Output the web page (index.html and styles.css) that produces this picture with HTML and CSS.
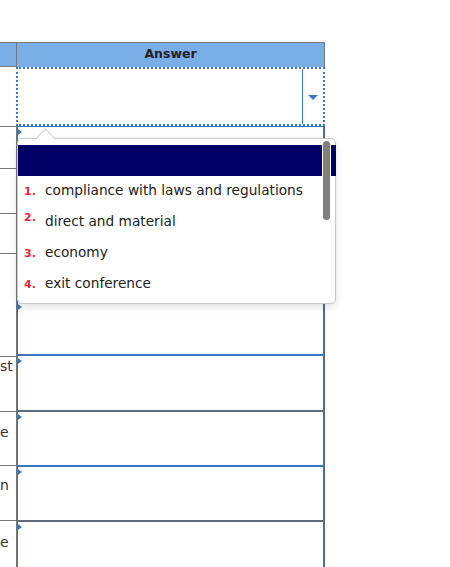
FILE: index.html
```html
<!DOCTYPE html>
<html>
<head>
<meta charset="utf-8">
<link rel="stylesheet" href="styles.css">
</head>
<body>
<div class="sheet">
  <div class="hrow">
    <div class="hcell-left"></div>
    <div class="hcell-answer">Answer</div>
  </div>
  <div class="irow">
    <div class="icell-left"></div>
    <div class="select">
      <div class="select-value"></div>
      <div class="select-btn"><span class="caret"></span></div>
    </div>
  </div>
  <div class="body">
    <div class="lcol">
      <div class="lcell h42"></div>
      <div class="lcell h45"></div>
      <div class="lcell h40"></div>
      <div class="lcell h103"></div>
      <div class="lcell h55 t1"><span class="frag">st</span></div>
      <div class="lcell h54 t12"><span class="frag">e</span></div>
      <div class="lcell h55 t11"><span class="frag">n</span></div>
      <div class="lcell h60 t13"><span class="frag">e</span></div>
    </div>
    <div class="rcol">
      <div class="rcell first h174"></div>
      <div class="rcell blue h54"></div>
      <div class="rcell blue h56"></div>
      <div class="rcell gray h55"></div>
      <div class="rcell blue h55"></div>
      <div class="rcell gray h60"></div>
    </div>
  </div>

  <div class="dropdown">
    <span class="pointer"></span>
    <div class="selected-bar"></div>
    <ul class="options">
      <li><span class="num">1.</span><span class="opt">compliance with laws and regulations</span></li>
      <li><span class="num raised">2.</span><span class="opt">direct and material</span></li>
      <li><span class="num">3.</span><span class="opt">economy</span></li>
      <li><span class="num">4.</span><span class="opt">exit conference</span></li>
    </ul>
    <div class="scroll-track"><div class="scroll-thumb"></div></div>
  </div>
</div>
</body>
</html>
```
FILE: styles.css
```css
html, body {
  margin: 0;
  padding: 0;
  background: #ffffff;
  font-family: "DejaVu Sans", Verdana, sans-serif;
  overflow: hidden;
}
.sheet {
  position: relative;
  width: 450px;
  height: 567px;
  padding-top: 42px;
  box-sizing: border-box;
}
.hrow {
  display: flex;
  width: 325px;
  height: 25px;
  box-sizing: border-box;
  border-top: 1px solid #777777;
  background: #7aaee6;
}
.hcell-left {
  width: 17px;
  box-sizing: border-box;
  border-right: 1px solid #777777;
  border-bottom: 1px solid #777777;
}
.hcell-answer {
  flex: 1;
  box-sizing: border-box;
  border-right: 1px solid #777777;
  text-align: center;
  font-weight: bold;
  font-size: 12.5px;
  line-height: 22px;
  color: #222222;
}
.irow {
  display: flex;
  width: 325px;
  height: 59px;
}
.icell-left {
  width: 16px;
}
.select {
  flex: 1;
  display: flex;
  box-sizing: border-box;
  border: 2px dotted #3b78c4;
}
.select-value {
  flex: 1;
}
.select-btn {
  width: 20px;
  border-left: 1px solid #3b78c4;
  display: flex;
  align-items: center;
  justify-content: center;
}
.caret {
  width: 0;
  height: 0;
  border-left: 5px solid transparent;
  border-right: 5px solid transparent;
  border-top: 5px solid #3b78c4;
  margin-top: 2px;
}
.body {
  display: flex;
  width: 325px;
}
.lcol {
  width: 17px;
  box-sizing: border-box;
  border-right: 1px solid #777777;
}
.lcell {
  box-sizing: border-box;
  border-top: 1px solid #777777;
  overflow: hidden;
  white-space: nowrap;
  font-size: 14px;
  color: #333333;
  line-height: 16px;
}
.frag { display: inline-block; }
.t1 { padding-top: 1px; }
.t11 { padding-top: 11px; }
.t12 { padding-top: 12px; }
.t13 { padding-top: 13px; }
.h40 { height: 40px; }
.h42 { height: 42px; }
.h45 { height: 45px; }
.h54 { height: 54px; }
.h55 { height: 55px; }
.h56 { height: 56px; }
.h60 { height: 60px; }
.h103 { height: 103px; }
.h174 { height: 174px; }
.rcol {
  flex: 1;
}
.rcell {
  position: relative;
  box-sizing: border-box;
  border-left: 1px solid #4a70a6;
  border-right: 2px solid #4c6d98;
}
.rcell::before {
  content: "";
  position: absolute;
  left: 0;
  top: 2px;
  width: 0;
  height: 0;
  border-top: 3px solid transparent;
  border-bottom: 3px solid transparent;
  border-left: 4px solid #3b78c4;
}
.rcell.first { border-top: 1px solid #3d6fb3; }
.rcell.blue { border-top: 2px solid #3b74be; }
.rcell.gray { border-top: 2px solid #5f6b7c; }

.dropdown {
  position: absolute;
  left: 17px;
  top: 138px;
  width: 319px;
  height: 166px;
  box-sizing: border-box;
  border: 1px solid #c9c9c9;
  border-radius: 5px;
  background: #ffffff;
  box-shadow: 0 3px 8px rgba(0, 0, 0, 0.13);
  padding-top: 6px;
}
.pointer {
  position: absolute;
  left: 21px;
  top: -8px;
  width: 12px;
  height: 12px;
  background: #ffffff;
  border-left: 1px solid #cfcfcf;
  border-top: 1px solid #cfcfcf;
  transform: rotate(45deg);
}
.selected-bar {
  position: relative;
  height: 31px;
  background: #000066;
  margin-right: -1px;
}
.options {
  list-style: none;
  margin: 0;
  padding: 0;
}
.options li {
  display: flex;
  align-items: baseline;
  height: 31px;
  line-height: 29px;
  padding-left: 6px;
}
.num {
  width: 21px;
  font-size: 11px;
  font-weight: bold;
  color: #ee1f3b;
  position: relative;
}
.num.raised { top: -5px; }
.opt {
  font-size: 13.7px;
  color: #222222;
}
.scroll-track {
  position: absolute;
  right: 4px;
  top: 1px;
  width: 9px;
  height: 38px;
  background: #ffffff;
}
.scroll-thumb {
  position: absolute;
  left: 1px;
  top: 1px;
  width: 7px;
  height: 79px;
  border-radius: 4px;
  background: #7f7f7f;
}
```
